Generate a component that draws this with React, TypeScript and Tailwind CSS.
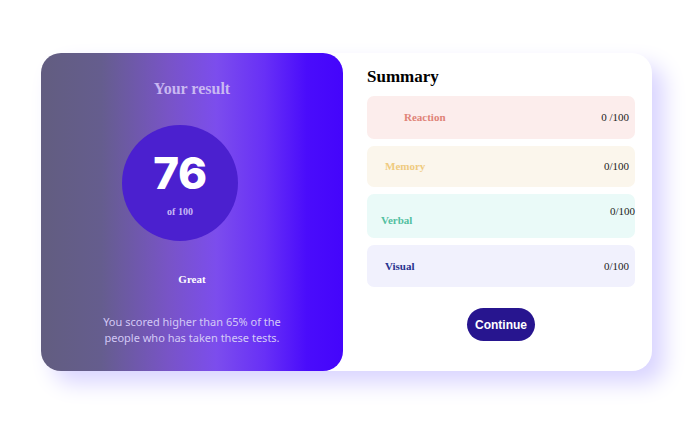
type Row = {
  label: string;
  score: string;
  box: string;
  text: string;
  verbal?: boolean;
};

const rows: Row[] = [
  { label: "Reaction", score: "0 /100", box: "h-[43px] bg-[#fcedec] pl-[37px]", text: "text-[#e08377]" },
  { label: "Memory", score: "0/100", box: "h-[41px] bg-[#fbf6ec] pl-[18px]", text: "text-[#efcb7f]" },
  { label: "Verbal", score: "0/100", box: "h-[44px] bg-[#eafaf8] pl-[14px]", text: "text-[#53c0a0]", verbal: true },
  { label: "Visual", score: "0/100", box: "h-[42px] bg-[#f1f1fd] pl-[18px]", text: "text-[#28338f]" },
];

function SummaryRow({ row }: { row: Row }) {
  // verbal row has its score sitting high and flush right, label lower
  if (row.verbal) {
    return (
      <div className={`flex justify-between rounded-[7px] ${row.box}`}>
        <span className={`self-end pb-[10px] font-['Liberation_Serif',serif] text-[11px] font-bold ${row.text}`}>
          {row.label}
        </span>
        <span className="pt-[9px] font-['Liberation_Serif',serif] text-[11px] text-[#222]">{row.score}</span>
      </div>
    );
  }
  return (
    <div className={`flex items-center justify-between rounded-[7px] pr-[6px] ${row.box}`}>
      <span className={`font-['Liberation_Serif',serif] text-[11px] font-bold ${row.text}`}>{row.label}</span>
      <span className="font-['Liberation_Serif',serif] text-[11px] text-[#222]">{row.score}</span>
    </div>
  );
}

export default function App() {
  return (
    <div className="h-[428px] w-[696px] bg-white pl-[41px] pt-[53px]">
      <div className="flex h-[318px] w-[611px] rounded-[20px] bg-white shadow-[12px_12px_22px_#d9d4ff]">
        {/* result panel */}
        <div className="flex h-[318px] w-[302px] flex-col items-center rounded-[20px] bg-[linear-gradient(90deg,#625d80_0%,#655d8e_20%,#7854c6_42%,#7c4ded_58%,#6830f6_74%,#4a0cfb_88%,#4405fb_100%)]">
          <h2 className="mt-[26px] font-['Liberation_Serif',serif] text-[16px] font-bold leading-[20px] text-[#c9b8f2]">
            Your result
          </h2>
          <div className="mr-[24px] mt-[26px] flex h-[116px] w-[116px] flex-col items-center justify-center rounded-full bg-[#4b20cf]">
            <span className="mt-[2px] font-['Inter',sans-serif] text-[44px] font-extrabold leading-[46px] tracking-[-0.5px] text-white">
              76
            </span>
            <span className="mt-[8px] font-['Liberation_Serif',serif] text-[10px] font-bold text-[#c7b9f5]">of 100</span>
          </div>
          <p className="mt-[30px] font-['Liberation_Serif',serif] text-[11px] font-bold text-white">Great</p>
          <p className="mt-[26px] w-[190px] text-center font-['Noto_Sans',sans-serif] text-[11px] leading-[16px] text-[#d3c9f6]">
            You scored higher than 65% of the people who has taken these tests.
          </p>
        </div>

        {/* summary panel */}
        <div className="flex flex-1 flex-col pl-[24px] pr-[17px]">
          <h2 className="mt-[13px] font-['Liberation_Serif',serif] text-[17px] font-bold leading-[22px] text-black">
            Summary
          </h2>
          <div className="mt-[8px] flex flex-col gap-[7px]">
            {rows.map((r) => (
              <SummaryRow key={r.label} row={r} />
            ))}
          </div>
          <div className="mt-[21px] flex justify-center">
            <button className="h-[33px] w-[68px] rounded-full bg-[#27158f] font-['Liberation_Sans',Arial,sans-serif] text-[12px] font-bold text-white">
              Continue
            </button>
          </div>
        </div>
      </div>
    </div>
  );
}
